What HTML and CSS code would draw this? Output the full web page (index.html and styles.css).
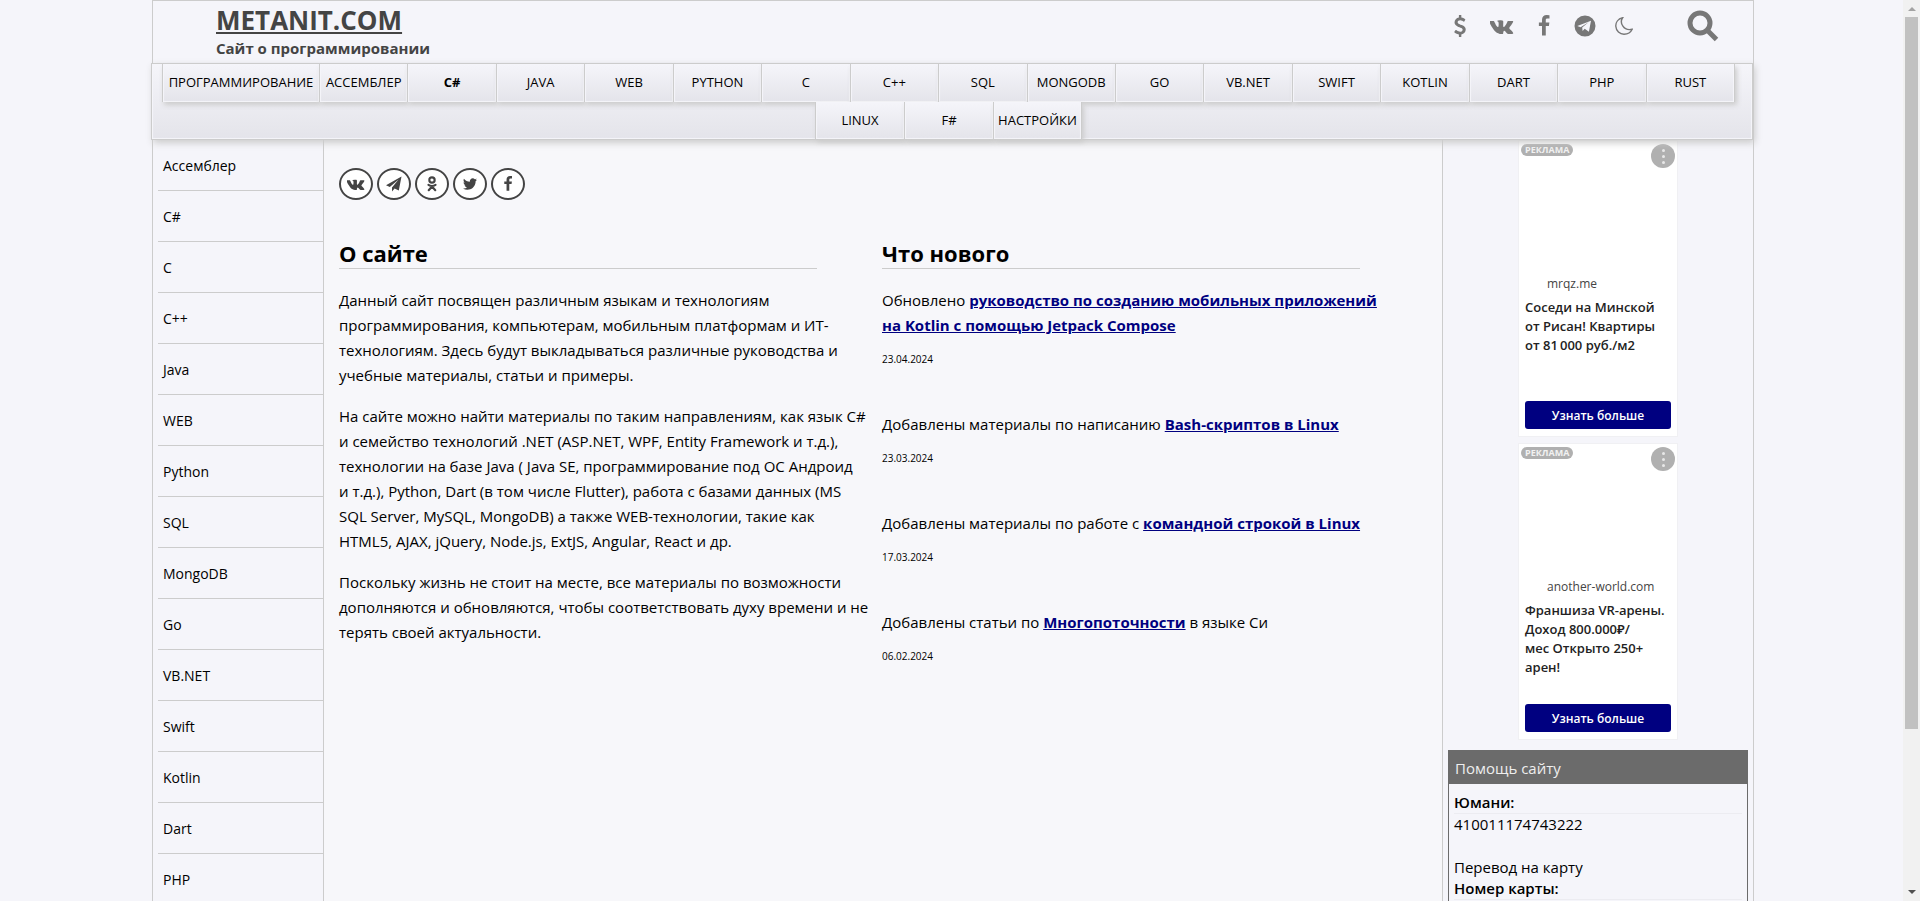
FILE: index.html
```html
<!DOCTYPE html>
<html lang="ru">
<head>
<meta charset="utf-8">
<title>METANIT.COM - Сайт о программировании</title>
<link rel="stylesheet" href="styles.css">
</head>
<body>
<svg class="defs" aria-hidden="true">
  <symbol id="i-vk" viewBox="0 0 1920 1792"><path d="M1853 520q23 64-150 294-24 32-65 85-78 100-90 131-17 41 14 81 17 21 81 82h1l1 1 1 1 2 2q141 131 191 221 3 5 6.500 12.500t7 26.500-.5 34-25 27.500-59 12.500l-256 4q-24 5-56-5t-52-22l-20-12q-30-21-70-64t-68.500-77.500-61-58-56.500-15.500q-3 1-8 3.500t-17 14.500-21.500 29.500-17 52-6.500 77.500q0 15-3.500 27.500t-7.500 18.500l-4 5q-18 19-53 22h-115q-71 4-146-16.500t-131.500-53-103-66-70.500-57.500l-25-24q-10-10-27.500-30t-71.500-91-106-151-122.500-211-130.500-272q-6-16-6-27t3-16l4-6q15-19 57-19l274-2q12 2 23 6.500t16 8.500l5 3q16 11 24 32 20 50 46 103.500t41 81.500l16 29q29 60 56 104t48.500 68.500 41.500 38.500 34 14 27-5q2-1 5-5t12-22 13.500-47 9.500-81 0-125q-2-40-9-73t-14-46l-6-12q-25-34-85-43-13-2 5-24 16-19 38-30 53-26 239-24 82 1 135 13 20 5 33.500 13.500t20.500 24 10.500 32 3.500 45.500-1 55-2.500 70.500-1.500 82.500q0 11-1 42t-.5 48 3.500 40.500 11.500 39 22.500 24.500q8 2 17 4t26-11 38-34.500 52-67 68-107.500q60-104 107-225 4-10 10-17.500t11-10.500l4-3 5-2.500 13-3 20-.5 288-2q39-5 64 2.500t31 16.500z"/></symbol>
  <symbol id="i-fb" viewBox="0 0 1792 1792"><path d="M1343 12v264h-157q-86 0-116 36t-30 108v189h293l-39 296h-254v759h-306v-759h-255v-296h255v-218q0-186 104-288.500t277-102.500q147 0 228 12z"/></symbol>
  <symbol id="i-tw" viewBox="0 0 1792 1792"><path d="M1684 408q-67 98-162 167 1 14 1 42 0 130-38 259.500t-115.500 248.500-184.500 210.500-258 146-323 54.500q-271 0-496-145 35 4 78 4 225 0 401-138-105-2-188-64.500t-114-159.500q33 5 61 5 43 0 85-11-112-23-185.500-111.500t-73.500-205.500v-4q68 38 146 41-66-44-105-115t-39-154q0-88 44-163 121 149 294.500 238.500t371.500 99.500q-8-38-8-74 0-134 94.500-228.500t228.500-94.500q140 0 236 102 109-21 205-78-37 115-142 178 93-10 186-50z"/></symbol>
  <symbol id="i-usd" viewBox="0 0 1792 1792"><path d="M1362 1185q0 153-99.500 263.500t-258.500 136.500v175q0 14-9 23t-23 9h-135q-13 0-22.500-9.500t-9.500-22.500v-175q-66-9-127.500-31t-101.500-44.500-74-48-46.500-37.500-17.500-18q-17-21-2-41l103-135q7-10 23-12 15-2 24 9l2 2q113 99 243 125 37 8 74 8 81 0 142.500-43t61.500-122q0-28-15-53t-33.500-42-58.500-37.500-66-32-80-32.500q-39-16-61.500-25t-61.500-26.500-62.500-31-56.500-35.500-53.500-42.500-43.500-49-35.500-58-21-66.500-8.500-78q0-138 98-242t255-134v-180q0-13 9.500-22.500t22.500-9.500h135q14 0 23 9t9 23v176q57 6 110.500 23t87 33.500 63.500 37.500 39 29 15 14q17 18 5 38l-81 146q-8 15-23 16-14 3-27-7-3-3-14.500-12t-39-26.500-58.500-32-74.500-26-85.500-11.500q-95 0-155 43t-60 111q0 26 8.500 48t29.500 41.500 39.500 33 56 31 60.500 27 70 27.500q53 20 81 31.500t76 35 75.500 42.500 62 50 53 63.500 31.500 76.500 13 94z"/></symbol>
  <symbol id="i-plane" viewBox="0 0 16 16"><path d="M15.500.5 0 9.300l3.800 1.600L12.600 3.500 6 11.500V15.500l2.600-3.100 4.200 2z"/></symbol>
  <symbol id="i-tg" viewBox="0 0 22 22"><path fill-rule="evenodd" d="M11 .5a10.500 10.500 0 1 0 0 21 10.500 10.500 0 0 0 0-21zM17 5.800 14.900 16.800l-4.200-3-2.100 2.300-.4-3.500 6.600-5.600-8.200 5.200-3.300-1.200z"/></symbol>
  <symbol id="i-moon" viewBox="0 0 18 18"><path fill="none" stroke="currentColor" stroke-width="1.400" d="M7.600.8C2.800 1.900.6 5.600.8 9.200c.3 4.700 4 8 8.200 8 3.700 0 6.700-1.700 8.200-4.900-4 .9-7.400-.2-9.300-3.100C6 6.400 5.800 3.400 7.600.8z"/></symbol>
  <symbol id="i-search" viewBox="0 0 32 32"><circle cx="13" cy="13" r="10" fill="none" stroke="currentColor" stroke-width="5"/><path fill="none" stroke="currentColor" stroke-width="5" d="m20 20 9.500 9.500"/></symbol>
  <symbol id="i-ok" viewBox="0 0 12 18"><g fill="none" stroke="currentColor" stroke-width="2.400"><circle cx="6" cy="4.500" r="3"/><path stroke-linecap="round" d="M2 10q4 2.500 8 0M6 11.800 2.300 16M6 11.800 9.700 16"/></g></symbol>
</svg>
<div class="viewport">
  <div class="page">
    <div class="container">
      <header class="head">
        <div>
          <a class="logo" href="#">METANIT.COM</a>
          <p class="slogan">Сайт о программировании</p>
        </div>
        <div class="tools">
          <a href="#" aria-label="Помощь сайту"><svg><use href="#i-usd"/></svg></a>
          <a href="#" aria-label="ВКонтакте"><svg class="wide"><use href="#i-vk"/></svg></a>
          <a href="#" aria-label="Facebook"><svg><use href="#i-fb"/></svg></a>
          <a href="#" aria-label="Telegram"><svg><use href="#i-tg"/></svg></a>
          <button type="button" aria-label="Тёмная тема"><svg class="moon"><use href="#i-moon"/></svg></button>
          <button type="button" class="search" aria-label="Поиск"><svg><use href="#i-search"/></svg></button>
        </div>
      </header>
      <nav class="nav">
        <ul class="row fill">
          <li class="long"><a href="#">ПРОГРАММИРОВАНИЕ</a></li><li><a href="#">АССЕМБЛЕР</a></li><li><a href="#" class="bold">C#</a></li><li><a href="#">JAVA</a></li><li><a href="#">WEB</a></li><li><a href="#">PYTHON</a></li><li><a href="#">C</a></li><li><a href="#">C++</a></li><li><a href="#">SQL</a></li><li><a href="#">MONGODB</a></li><li><a href="#">GO</a></li><li><a href="#">VB.NET</a></li><li><a href="#">SWIFT</a></li><li><a href="#">KOTLIN</a></li><li><a href="#">DART</a></li><li><a href="#">PHP</a></li><li><a href="#">RUST</a></li>
        </ul>
        <ul class="row">
          <li><a href="#">LINUX</a></li><li><a href="#">F#</a></li><li><a href="#">НАСТРОЙКИ</a></li>
        </ul>
      </nav>
      <div class="body">
        <aside class="side">
          <ul>
            <li><a href="#">Ассемблер</a></li><li><a href="#">C#</a></li><li><a href="#">C</a></li><li><a href="#">C++</a></li><li><a href="#">Java</a></li><li><a href="#">WEB</a></li><li><a href="#">Python</a></li><li><a href="#">SQL</a></li><li><a href="#">MongoDB</a></li><li><a href="#">Go</a></li><li><a href="#">VB.NET</a></li><li><a href="#">Swift</a></li><li><a href="#">Kotlin</a></li><li><a href="#">Dart</a></li><li><a href="#">PHP</a></li>
          </ul>
        </aside>
        <main class="main">
          <div class="share">
            <a href="#" aria-label="ВКонтакте"><svg class="vk"><use href="#i-vk"/></svg></a>
            <a href="#" aria-label="Telegram"><svg><use href="#i-plane"/></svg></a>
            <a href="#" aria-label="Одноклассники"><svg><use href="#i-ok"/></svg></a>
            <a href="#" aria-label="Twitter"><svg><use href="#i-tw"/></svg></a>
            <a href="#" aria-label="Facebook"><svg><use href="#i-fb"/></svg></a>
          </div>
          <div class="cols">
            <section class="about">
              <h2>О сайте</h2>
              <p>Данный сайт посвящен различным языкам и технологиям программирования, компьютерам, мобильным платформам и ИТ-технологиям. Здесь будут выкладываться различные руководства и учебные материалы, статьи и примеры.</p>
              <p>На сайте можно найти материалы по таким направлениям, как язык C# и семейство технологий .NET (ASP.NET, WPF, Entity Framework и т.д.), технологии на базе Java ( Java SE, программирование под ОС Андроид и&nbsp;т.д.), Python, Dart (в том числе Flutter), работа с базами данных (MS SQL&nbsp;Server, MySQL, MongoDB) а также WEB-технологии, такие как HTML5, AJAX, jQuery, Node.js, ExtJS, Angular, React и др.</p>
              <p>Поскольку жизнь не стоит на месте, все материалы по возможности дополняются и обновляются, чтобы соответствовать духу времени и не терять своей актуальности.</p>
            </section>
            <section class="news">
              <h2>Что нового</h2>
              <article><p>Обновлено <a href="#">руководство по созданию мобильных приложений на Kotlin с помощью Jetpack Compose</a></p><time datetime="2024-04-23">23.04.2024</time></article>
              <article><p>Добавлены материалы по написанию <a href="#">Bash-скриптов в Linux</a></p><time datetime="2024-03-23">23.03.2024</time></article>
              <article><p>Добавлены материалы по работе с <a href="#">командной строкой в Linux</a></p><time datetime="2024-03-17">17.03.2024</time></article>
              <article><p>Добавлены статьи по <a href="#">Многопоточности</a> в языке Си</p><time datetime="2024-02-06">06.02.2024</time></article>
            </section>
          </div>
        </main>
        <aside class="right">
          <div class="ad">
            <div class="adtop"><span class="badge">РЕКЛАМА</span><button type="button" class="dots" aria-label="Меню"><i></i><i></i><i></i></button></div>
            <a class="domain" href="#">mrqz.me</a>
            <p class="adtext">Соседи на Минской от Рисан! Квартиры от 81&#8201;000 руб./м2</p>
            <button type="button" class="more">Узнать больше</button>
          </div>
          <div class="ad">
            <div class="adtop"><span class="badge">РЕКЛАМА</span><button type="button" class="dots" aria-label="Меню"><i></i><i></i><i></i></button></div>
            <a class="domain" href="#">another-world.com</a>
            <p class="adtext">Франшиза VR-арены. Доход 800.000₽/<br>мес Открыто 250+ арен!</p>
            <button type="button" class="more">Узнать больше</button>
          </div>
          <section class="help">
            <h3>Помощь сайту</h3>
            <dl>
              <dt>Юмани:</dt>
              <dd>410011174743222</dd>
            </dl>
            <p>Перевод на карту</p>
            <dl>
              <dt>Номер карты:</dt>
            </dl>
          </section>
        </aside>
      </div>
    </div>
  </div>
  <div class="scroll" aria-hidden="true"><span class="up"></span><span class="thumb"></span><span class="down"></span></div>
</div>
</body>
</html>
```
FILE: styles.css
```css
* { box-sizing: border-box; }
body { margin: 0; background: #f5f5fa; color: #000; font-family: "Open Sans", "Noto Sans", sans-serif; font-size: 15px; }
ul, dl, dd, p, h2, h3 { margin: 0; padding: 0; }
ul { list-style: none; }
a { color: inherit; text-decoration: none; }
button { border: 0; padding: 0; background: none; color: inherit; font: inherit; cursor: pointer; }
svg { display: block; fill: currentColor; }
.defs { display: none; }

.viewport { display: flex; height: 100vh; overflow: hidden; }
.page { flex: 1; min-width: 0; padding-left: 3px; overflow: hidden; }
.container { max-width: 1602px; min-height: 100%; margin: 0 auto; border: 1px solid #ccc; }

.head { display: flex; justify-content: space-between; height: 62px; padding: 0 34px 0 63px; color: #444; }
.logo { display: block; font-size: 26px; line-height: 38px; font-weight: 700; text-decoration: underline; }
.slogan { font-size: 15px; line-height: 18px; font-weight: 700; }
.tools { display: flex; align-items: center; height: 50px; gap: 19px; color: #777; }
.tools svg { width: 22px; height: 22px; }
.tools .wide { width: 24px; height: 24px; }
.tools .moon { width: 18px; height: 18px; }
.tools .search { margin-left: 35px; }
.tools .search svg { width: 32px; height: 32px; }

.nav { position: relative; margin: 0 0 0 -2px; padding: 0 17px 0 10px; border: 1px solid #ccc; background: linear-gradient(#f5f5fa, #e4e4ea); box-shadow: inset 0 0 1px 1px #f5f5fa, 2px 3px 7px #ccc; font-size: 13px; }
.row { display: flex; justify-content: center; }
.row li { min-width: 89px; height: 38px; border-left: 1px solid #ccc; background: linear-gradient(#f5f5fa, #e4e4ea); box-shadow: inset 0 0 1px 1px #f5f5fa, 2px 3px 5px #ccc; text-align: center; }
.row + .row li { height: 37px; }
.row li:last-child { border-right: 1px solid #ccc; }
.row.fill li { flex: 1 1 0; min-width: 0; }
.row.fill .long { flex: none; width: 157px; }
.row a { display: block; line-height: 37px; white-space: nowrap; }
.row .bold { font-weight: 700; }

.body { display: grid; grid-template-columns: 171px minmax(0, 1fr) 311px; }
.side { padding-left: 5px; border-right: 1px solid #ccc; font-size: 14px; }
.side li { height: 51px; padding-left: 5px; border-bottom: 1px solid #ccc; line-height: 52px; }
.side a { display: block; }
.main { padding: 28px 17px 0 15px; background: #f7f7fa; }
.share { display: flex; gap: 4px; color: #444; }
.share a { display: flex; align-items: center; justify-content: center; width: 34px; height: 32px; border: 2px solid #444; border-radius: 50%; background: #fff; }
.share svg { width: 16px; height: 16px; }
.share .vk { width: 18px; height: 18px; }
.cols { display: grid; grid-template-columns: 1fr 1fr; margin-top: 38px; line-height: 25px; }
h2 { width: 88%; margin-bottom: 19px; border-bottom: 1px solid #ccc; font-size: 22px; line-height: 30px; font-weight: 700; }
.about p { margin-bottom: 16px; padding-right: 12px; }
.news article { margin-bottom: 40px; }
.news p { margin-bottom: 9px; padding-right: 40px; }
.news a { color: #000080; font-weight: 700; text-decoration: underline; }
.news time { display: block; font-size: 10px; }

.right { padding: 0 5px; border-left: 1px solid #ccc; }
.ad { display: flex; flex-direction: column; width: 160px; min-height: 297px; margin: 0 auto 6px; padding: 3px 6px 7px; border: 1px solid #f0f0f3; background: #fff; color: #222; }
.adtop { display: flex; align-items: flex-start; justify-content: space-between; margin: 0 -4px 0 -4px; }
.badge { padding: 0 4px; border-radius: 6px; background: #b0b0b0; color: #f2f2f2; font-size: 9px; line-height: 12px; font-weight: 700; }
.dots { display: flex; flex-direction: column; align-items: center; justify-content: center; gap: 3px; width: 24px; height: 24px; border-radius: 50%; background: #b0b0b0; }
.dots i { width: 3px; height: 3px; border-radius: 50%; background: #e8e8e8; }
.domain { margin: 107px 0 5px 22px; font-size: 12px; line-height: 18px; color: #444; }
.adtext { font-size: 13px; line-height: 19px; font-weight: 600; }
.more { height: 28px; margin-top: auto; border-radius: 3px; background: #000080; color: #fff; font-size: 12px; font-weight: 600; }
.help { margin-top: 10px; padding-bottom: 40px; border: 1px solid #6b6b6b; line-height: 21px; }
.help h3 { margin-bottom: 8px; padding: 2px 6px 0; background: #6b6b6b; color: #eee; font-size: 15px; line-height: 31px; font-weight: 400; }
.help dl { margin: 0 5px; }
.help dt { border-bottom: 1px solid #ececf1; font-weight: 600; }
.help dd { margin-bottom: 23px; line-height: 20px; }
.help p { padding: 0 5px; line-height: 21px; }

.scroll { display: flex; flex: none; flex-direction: column; align-items: center; width: 17px; background: #f1f1f1; }
.up { margin: 7px 0 6px; border: 4px solid transparent; border-top: 0; border-bottom-color: #a3a3a3; }
.thumb { width: 13px; height: 79%; background: #c1c1c1; }
.down { margin: auto 0 7px; border: 4px solid transparent; border-bottom: 0; border-top-color: #505050; }
```
